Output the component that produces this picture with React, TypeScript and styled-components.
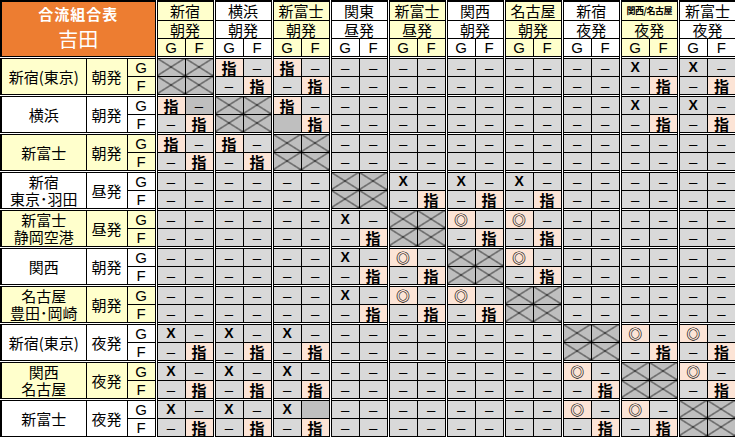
import React from 'react';
import styled, { createGlobalStyle } from 'styled-components';

const GlobalStyle = createGlobalStyle`
  html, body {
    margin: 0;
    padding: 0;
    background: #fff;
  }
  body {
    font-family: "Noto Sans CJK JP", sans-serif;
  }
`;

const CREAM = '#ffffcc';
const WHITE = '#ffffff';
const GREY = '#d9d9d9';
const DARK = '#bfbfbf';
const PINK = '#fce4d6';
const ORANGE = '#ed7d31';

const cols = [
  { name: '新宿', hatsu: '朝発', bg: CREAM },
  { name: '横浜', hatsu: '朝発', bg: WHITE },
  { name: '新富士', hatsu: '朝発', bg: CREAM },
  { name: '関東', hatsu: '昼発', bg: WHITE },
  { name: '新富士', hatsu: '昼発', bg: CREAM },
  { name: '関西', hatsu: '朝発', bg: WHITE },
  { name: '名古屋', hatsu: '朝発', bg: CREAM },
  { name: '新宿', hatsu: '夜発', bg: WHITE },
  { name: '関西/名古屋', hatsu: '夜発', bg: CREAM, small: true },
  { name: '新富士', hatsu: '夜発', bg: WHITE },
];

// B = 斜線, s = 指, o = ◎, x = X, - = －, d = 濃灰 －, e = 濃灰 空
const rows = [
  { name: ['新宿(東京)'], hatsu: '朝発', bg: CREAM,
    g: 'BB s- s- -- -- -- -- -- x- x-', f: 'BB -s -s -- -- -- -- -- -s -s' },
  { name: ['横浜'], hatsu: '朝発', bg: WHITE,
    g: 'sd BB s- -- -- -- -- -- x- x-', f: '-s BB es -- -- -- -- -- -s -s' },
  { name: ['新富士'], hatsu: '朝発', bg: CREAM,
    g: 's- s- BB -- -- -- -- -- -- --', f: '-s -s BB -- -- -- -- -- -- --' },
  { name: ['新宿', '東京･羽田'], hatsu: '昼発', bg: WHITE,
    g: '-- -- -- BB x- x- x- -- -- --', f: '-- -- -- BB -s -s -s -- -- --' },
  { name: ['新富士', '静岡空港'], hatsu: '昼発', bg: CREAM,
    g: '-- -- -- x- BB o- o- -- -- --', f: '-- -- -- -s BB -s -s -- -- --' },
  { name: ['関西'], hatsu: '朝発', bg: WHITE,
    g: '-- -- -- x- o- BB o- -- -- --', f: '-- -- -- -s -s BB -s -- -- --' },
  { name: ['名古屋', '豊田･岡崎'], hatsu: '朝発', bg: CREAM,
    g: '-- -- -- x- o- o- BB -- -- --', f: '-- -- -- -s -s -s BB -- -- --' },
  { name: ['新宿(東京)'], hatsu: '夜発', bg: WHITE,
    g: 'x- x- x- -- -- -- -- BB o- o-', f: '-s -s -s -- -- -- -- BB -s -s' },
  { name: ['関西', '名古屋'], hatsu: '夜発', bg: CREAM,
    g: 'x- x- x- -- -- -- -- o- BB o-', f: '-s -s -s -- -- -- -- -s BB -s' },
  { name: ['新富士'], hatsu: '夜発', bg: WHITE,
    g: 'x- x- xe -- -- -- -- o- o- BB', f: '-s -s -s -- -- -- -- -s -s BB' },
];

const Sheet = styled.table`
  width: 735px;
  table-layout: fixed;
  border-collapse: collapse;
  border: 2px solid #000;
  color: #000;
`;

const Cell = styled.td<{ $bg?: string; $dl?: boolean; $dt?: boolean }>`
  padding: 0;
  border: 1px solid #000;
  ${(p) => (p.$dl ? 'border-left: 3px double #000;' : '')}
  ${(p) => (p.$dt ? 'border-top: 3px double #000;' : '')}
  background: ${(p) => p.$bg || WHITE};
  text-align: center;
  vertical-align: middle;
  white-space: nowrap;
  overflow: hidden;
  font-size: 15px;
  line-height: 17px;
`;

const CrossCell = styled(Cell)`
  background-color: ${DARK};
  background-image:
    linear-gradient(to top right, transparent calc(50% - 0.7px), #000 50%, transparent calc(50% + 0.7px)),
    linear-gradient(to bottom right, transparent calc(50% - 0.7px), #000 50%, transparent calc(50% + 0.7px));
`;

const Title = styled(Cell)`
  background: ${ORANGE};
  color: #fff;
  vertical-align: top;
  padding-top: 3px;
`;

const TitleTop = styled.div`
  font-size: 15px;
  font-weight: bold;
  line-height: 18px;
  letter-spacing: 1px;
`;

const TitleName = styled.div`
  font-size: 20px;
  line-height: 22px;
  margin-top: 5px;
`;

const Line = styled.div<{ $h?: number }>`
  height: ${(p) => p.$h || 17}px;
  line-height: ${(p) => p.$h || 17}px;
`;

const SmallName = styled.div`
  height: 17px;
  line-height: 17px;
  font-size: 9px;
  font-weight: bold;
  letter-spacing: -0.5px;
`;

const Letter = styled.div`
  height: 17px;
  line-height: 17px;
  font-family: "Liberation Sans", Arial, sans-serif;
  font-size: 15px;
`;

const Shi = styled.div`
  height: 17px;
  line-height: 17px;
  font-weight: bold;
  font-size: 15px;
`;

const Batsu = styled.div`
  height: 17px;
  line-height: 17px;
  font-family: "Liberation Sans", Arial, sans-serif;
  font-weight: bold;
  font-size: 14px;
`;

const Maru = styled.div`
  height: 17px;
  line-height: 17px;
  font-size: 14px;
  font-weight: bold;
`;

const Dash = styled.div`
  height: 17px;
  line-height: 17px;
  font-family: "Liberation Sans", Arial, sans-serif;
  font-size: 15px;
`;

const HeadRow = styled.tr<{ $h: number }>`
  height: ${(p) => p.$h}px;
`;

const DataRow = styled.tr`
  height: 19px;
`;

const Mark = ({ code, dl, dt }: { code: string; dl: boolean; dt: boolean }) => {
  if (code === 'B') return <CrossCell $dl={dl} $dt={dt} />;
  if (code === 's')
    return (
      <Cell $bg={PINK} $dl={dl} $dt={dt}>
        <Shi>指</Shi>
      </Cell>
    );
  if (code === 'o')
    return (
      <Cell $bg={PINK} $dl={dl} $dt={dt}>
        <Maru>◎</Maru>
      </Cell>
    );
  if (code === 'x')
    return (
      <Cell $bg={GREY} $dl={dl} $dt={dt}>
        <Batsu>X</Batsu>
      </Cell>
    );
  if (code === 'd')
    return (
      <Cell $bg={DARK} $dl={dl} $dt={dt}>
        <Dash>–</Dash>
      </Cell>
    );
  if (code === 'e') return <Cell $bg={DARK} $dl={dl} $dt={dt} />;
  return (
    <Cell $bg={GREY} $dl={dl} $dt={dt}>
      <Dash>–</Dash>
    </Cell>
  );
};

const marks = (s: string) => s.replace(/ /g, '').split('');

export default function App() {
  return (
    <>
      <GlobalStyle />
      <Sheet>
        <colgroup>
          <col style={{ width: 85 }} />
          <col style={{ width: 41 }} />
          <col style={{ width: 29 }} />
          {Array.from({ length: 20 }).map((_, i) => (
            <col key={i} style={{ width: 29 }} />
          ))}
        </colgroup>
        <tbody>
          <HeadRow $h={19}>
            <Title colSpan={3} rowSpan={3}>
              <TitleTop>合流組合表</TitleTop>
              <TitleName>吉田</TitleName>
            </Title>
            {cols.map((c, i) => (
              <Cell key={i} colSpan={2} $bg={c.bg} $dl>
                {c.small ? <SmallName>{c.name}</SmallName> : <Line>{c.name}</Line>}
              </Cell>
            ))}
          </HeadRow>
          <HeadRow $h={18}>
            {cols.map((c, i) => (
              <Cell key={i} colSpan={2} $bg={c.bg} $dl>
                <Line>{c.hatsu}</Line>
              </Cell>
            ))}
          </HeadRow>
          <HeadRow $h={18}>
            {cols.map((c, i) => (
              <React.Fragment key={i}>
                <Cell $bg={c.bg} $dl>
                  <Letter>G</Letter>
                </Cell>
                <Cell $bg={c.bg}>
                  <Letter>F</Letter>
                </Cell>
              </React.Fragment>
            ))}
          </HeadRow>
          {rows.map((r, ri) => (
            <React.Fragment key={ri}>
              <DataRow>
                <Cell rowSpan={2} $bg={r.bg} $dt>
                  {r.name.map((n, k) => (
                    <Line key={k}>{n}</Line>
                  ))}
                </Cell>
                <Cell rowSpan={2} $bg={r.bg} $dt>
                  <Line>{r.hatsu}</Line>
                </Cell>
                <Cell $bg={r.bg} $dt>
                  <Letter>G</Letter>
                </Cell>
                {marks(r.g).map((m, k) => (
                  <Mark key={k} code={m} dl={k % 2 === 0} dt />
                ))}
              </DataRow>
              <DataRow>
                <Cell $bg={r.bg}>
                  <Letter>F</Letter>
                </Cell>
                {marks(r.f).map((m, k) => (
                  <Mark key={k} code={m} dl={k % 2 === 0} dt={false} />
                ))}
              </DataRow>
            </React.Fragment>
          ))}
        </tbody>
      </Sheet>
    </>
  );
}
